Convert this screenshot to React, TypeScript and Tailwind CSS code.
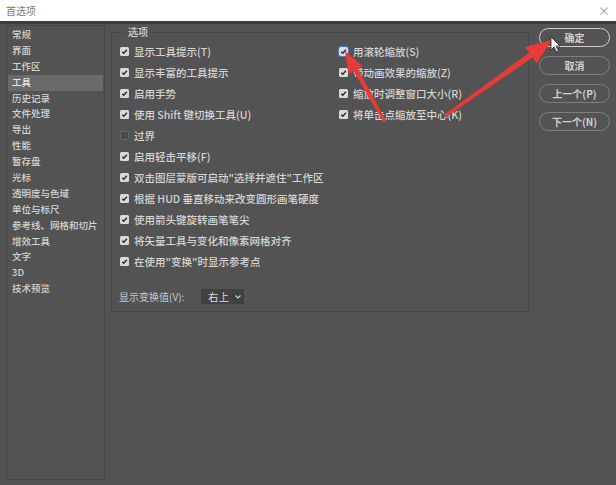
import React from 'react';

const sideItems = [
  '常规', '界面', '工作区', '工具', '历史记录', '文件处理', '导出', '性能', '暂存盘',
  '光标', '透明度与色域', '单位与标尺', '参考线、网格和切片', '增效工具', '文字', '3D', '技术预览',
];

const leftOpts: { label: string; checked: boolean }[] = [
  { label: '显示工具提示(T)', checked: true },
  { label: '显示丰富的工具提示', checked: true },
  { label: '启用手势', checked: true },
  { label: '使用 Shift 键切换工具(U)', checked: true },
  { label: '过界', checked: false },
  { label: '启用轻击平移(F)', checked: true },
  { label: '双击图层蒙版可启动"选择并遮住"工作区', checked: true },
  { label: '根据 HUD 垂直移动来改变圆形画笔硬度', checked: true },
  { label: '使用箭头键旋转画笔笔尖', checked: true },
  { label: '将矢量工具与变化和像素网格对齐', checked: true },
  { label: '在使用"变换"时显示参考点', checked: true },
];

const rightOpts = ['用滚轮缩放(S)', '带动画效果的缩放(Z)', '缩放时调整窗口大小(R)', '将单击点缩放至中心(K)'];

const Check = ({ checked, focus }: { checked: boolean; focus?: boolean }) =>
  checked ? (
    <span
      className={`w-[9px] h-[9px] rounded-[1.5px] bg-[#d9d9d9] flex items-center justify-center shrink-0 ${
        focus ? 'outline outline-1 outline-[#4a7fc8]' : ''
      }`}
    >
      <svg width="7" height="7" viewBox="0 0 10 10">
        <path d="M1.8 5.2 L4 7.4 L8.4 2.4" stroke="#2a2a2a" strokeWidth="2" fill="none" />
      </svg>
    </span>
  ) : (
    <span className="w-[9px] h-[9px] rounded-[1.5px] bg-[#4a4a4a] border border-[#6a6a6a] shrink-0" />
  );

const Btn = ({ label, primary }: { label: string; primary?: boolean }) => (
  <div
    className={`h-[19px] rounded-full border-[1.5px] flex items-center justify-center text-[10px] font-bold text-[#cfcfcf] ${
      primary ? 'border-[#cfcfcf]' : 'border-[#7e7e7e]'
    }`}
  >
    {label}
  </div>
);

export default function App() {
  return (
    <div
      className="relative w-[616px] h-[485px] bg-[#535353] overflow-hidden text-[#d4d4d4]"
      style={{ fontFamily: '"Noto Sans CJK SC", "Noto Sans", sans-serif' }}
    >
      {/* Title bar */}
      <div className="h-[21px] bg-white flex items-center justify-between pl-[6px] pr-[6px] border-b-[3px] border-[#3c3c3c] box-content">
        <span className="text-[10px] text-[#7a7a7a] leading-none">首选项</span>
        <span className="text-[12px] text-[#9a9a9a] leading-none">×</span>
      </div>

      <div className="flex pt-[1px]">
        {/* Sidebar */}
        <div className="ml-[6px] w-[99px] h-[455px] border border-[#474747] pt-[1px] px-[1px]">
          {sideItems.map((s) => (
            <div
              key={s}
              className={`h-[15.9px] leading-[15.9px] pl-[4px] text-[9.5px] font-medium whitespace-nowrap ${
                s === '工具' ? 'bg-[#6a6a6a] text-[#e8e8e8]' : ''
              }`}
            >
              {s}
            </div>
          ))}
        </div>

        {/* Options group */}
        <div className="relative ml-[6px] mt-[7px] w-[418px] h-[280px] border border-[#484848]">
          <span className="absolute left-[12px] top-[-8px] px-[4px] bg-[#535353] text-[10px] leading-[14px] font-medium">
            选项
          </span>
          <div className="flex pt-[8px]">
            <div className="pl-[8px] w-[227px] shrink-0">
              {leftOpts.map((o) => (
                <div key={o.label} className="h-[21px] flex items-center gap-[5px] text-[10.5px] font-medium whitespace-nowrap">
                  <Check checked={o.checked} />
                  <span>{o.label}</span>
                </div>
              ))}
            </div>
            <div>
              {rightOpts.map((o, i) => (
                <div key={o} className="h-[21px] flex items-center gap-[5px] text-[10.5px] font-medium whitespace-nowrap">
                  <Check checked focus={i === 0} />
                  <span>{o}</span>
                </div>
              ))}
            </div>
          </div>
          <div className="flex items-center pl-[7px] mt-[17px] text-[10px] whitespace-nowrap">
            <span className="w-[82px] text-[#c8c8c8]">显示变换值(V):</span>
            <div className="h-[15px] w-[43px] bg-[#414141] flex items-center pl-[7px] gap-[6px]">
              <span className="text-[10.5px] text-[#dcdcdc] whitespace-nowrap">右上</span>
              <svg width="6" height="4" viewBox="0 0 6 4" className="shrink-0">
                <path d="M0.5 0.5 L3 3 L5.5 0.5" stroke="#cfcfcf" strokeWidth="1.2" fill="none" />
              </svg>
            </div>
          </div>
        </div>

        {/* Buttons */}
        <div className="ml-[10px] mt-[3px] w-[71px] flex flex-col gap-[9px]">
          <Btn label="确定" primary />
          <Btn label="取消" />
          <Btn label="上一个(P)" />
          <Btn label="下一个(N)" />
        </div>
      </div>

      {/* Annotation arrows and cursor */}
      <svg className="absolute inset-0 pointer-events-none" width="616" height="485" viewBox="0 0 616 485">
        <polygon
          points="345,51 362.8,66.2 358,68.9 386.3,121.3 383.7,122.7 353.6,71.3 348.8,74"
          fill="#e83a36"
        />
        <polygon
          points="552,40 536.6,63.3 532.5,57.5 445.9,117.2 444.1,114.8 529.1,52.7 525,46.9"
          fill="#e83a36"
        />
        <path
          d="M551 37 L551 50 L554 47 L556.5 52 L558.5 51 L556 46 L560 46 Z"
          fill="#ffffff"
          stroke="#222"
          strokeWidth="0.8"
        />
      </svg>
    </div>
  );
}
